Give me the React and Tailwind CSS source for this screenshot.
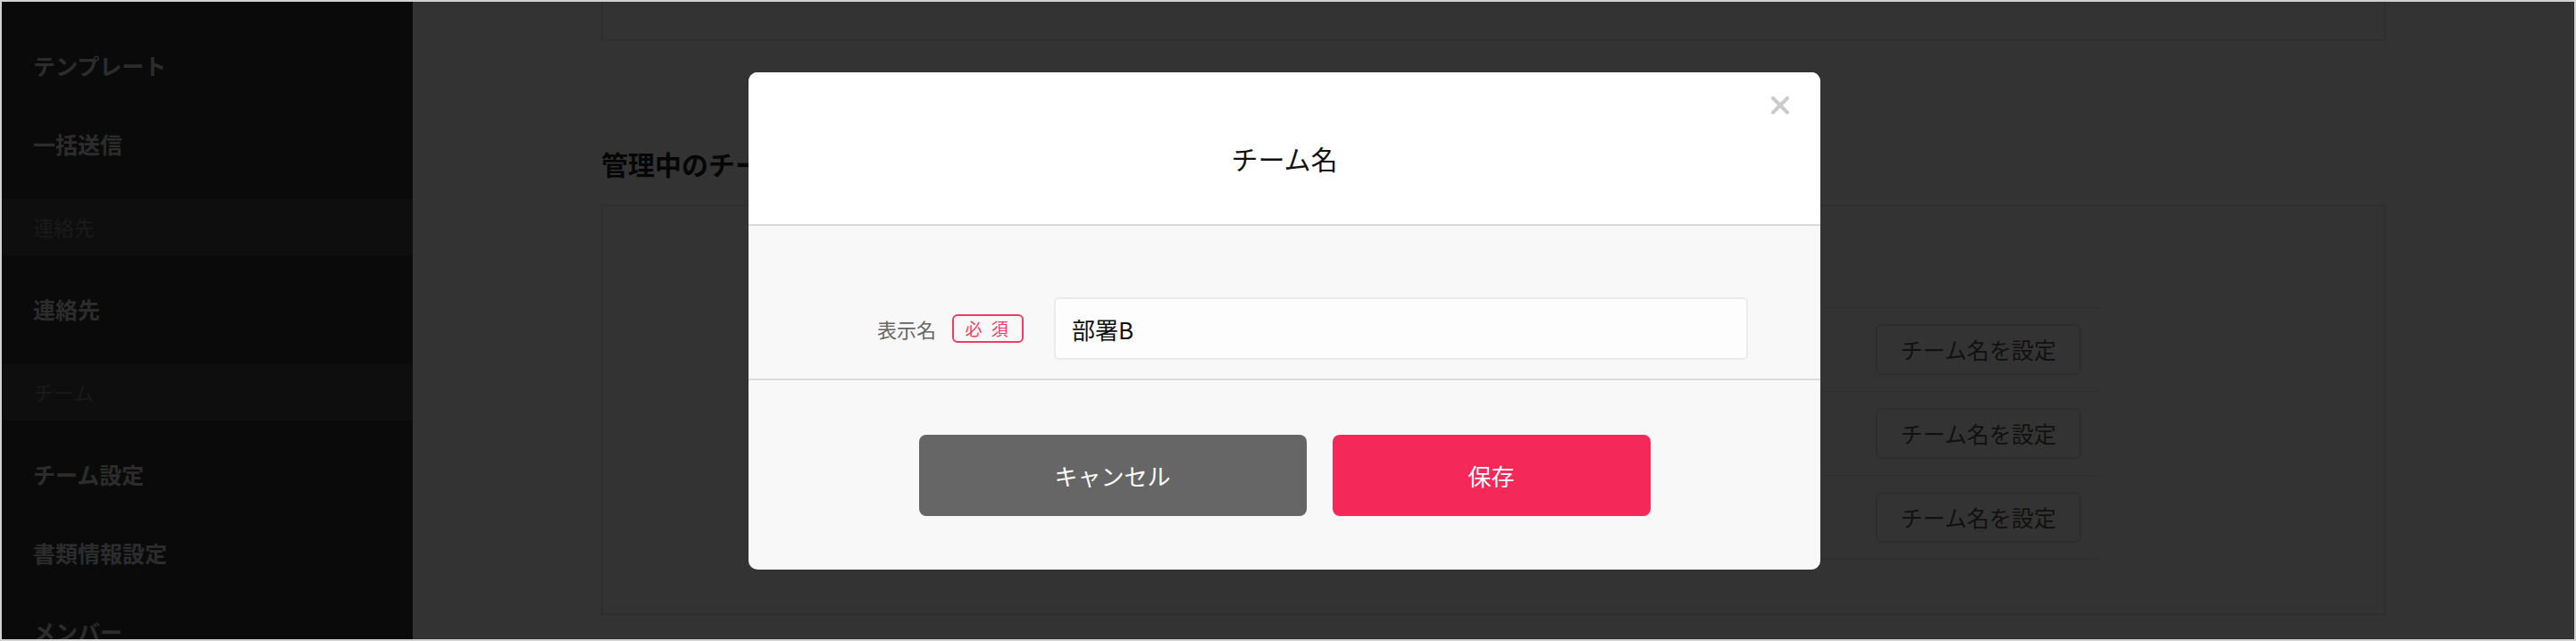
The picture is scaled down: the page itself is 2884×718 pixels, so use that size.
// App.jsx
const menu = [
  { type: 'item', label: 'テンプレート' },
  { type: 'item', label: '一括送信' },
  { type: 'head', label: '連絡先' },
  { type: 'item', label: '連絡先' },
  { type: 'head', label: 'チーム' },
  { type: 'item', label: 'チーム設定' },
  { type: 'item', label: '書類情報設定' },
  { type: 'item', label: 'メンバー' },
]

const teams = ['部署A', '部署B', '部署C']

function Sidebar() {
  return (
    <aside className="w-[460px] shrink-0 bg-[#323232] pt-[28px]">
      {menu.map((m, i) =>
        m.type === 'head' ? (
          <div
            key={i}
            className="h-[63px] my-[17px] bg-[#464646] flex items-center pl-[35px] text-[23px] text-[#808080]"
          >
            {m.label}
          </div>
        ) : (
          <div
            key={i}
            className="h-[88px] flex items-center pl-[35px] text-[25px] font-bold text-[#dcdcdc]"
          >
            {m.label}
          </div>
        )
      )}
    </aside>
  )
}

function TeamList() {
  return (
    <main className="flex-1 bg-white">
      <div className="w-[1998px] mx-auto">
        <div className="h-[44px] border-x-2 border-b-2 border-[#e6e6e6]" />
        <h2 className="mt-[115px] mb-[24px] text-[30px] leading-[44px] font-bold text-[#222]">
          管理中のチーム
        </h2>
        <div className="border-2 border-[#e6e6e6] pt-[113px] pb-[60px] pl-[225px]">
          <div className="w-[1450px] border-t border-[#e6e6e6]">
            {teams.map((t) => (
              <div
                key={t}
                className="h-[94px] border-b border-[#e6e6e6] flex items-center justify-between pl-[40px] pr-[20px]"
              >
                <span className="text-[25px] text-[#333]">{t}</span>
                <button className="w-[230px] h-[57px] border-2 border-[#e2e2e2] rounded-[6px] text-[25px] text-[#555]">
                  チーム名を設定
                </button>
              </div>
            ))}
          </div>
        </div>
      </div>
    </main>
  )
}

function TeamNameModal() {
  return (
    <div className="absolute left-[836px] top-[79px] w-[1200px] rounded-[10px] overflow-hidden bg-[#f8f8f8]">
      <div className="relative h-[172px] bg-white border-b-2 border-[#d9d9d9] pt-[76px] text-center">
        <h3 className="text-[30px] leading-[40px] text-[#111]">チーム名</h3>
        <button className="absolute right-[35px] top-[27px] w-[20px] h-[20px]">
          <svg width="20" height="20" viewBox="0 0 20 20">
            <path d="M2 2 L18 18 M18 2 L2 18" stroke="#cbcbcb" strokeWidth="4" strokeLinecap="round" />
          </svg>
        </button>
      </div>

      <div className="h-[173px] border-b-2 border-[#dcdcdc] pt-[80px] pl-[144px] flex items-start">
        <div className="h-[70px] flex items-center">
          <span className="text-[22px] text-[#666]">表示名</span>
          <span className="ml-[18px] w-[80px] h-[32px] border-2 border-[#f23b63] rounded-[6px] flex items-center justify-center text-[19px] text-[#f23b63] tracking-[3px]">
            必 須
          </span>
        </div>
        <div className="ml-[34px] w-[777px] h-[70px] bg-[#fdfdfd] border-2 border-[#ebebeb] rounded-[6px] flex items-center pl-[18px] text-[26px] text-[#111]">
          部署B
        </div>
      </div>

      <div className="h-[212px] pt-[61px] flex justify-center gap-[29px]">
        <button className="w-[434px] h-[91px] rounded-[8px] bg-[#666] text-white text-[26px]">
          キャンセル
        </button>
        <button className="w-[356px] h-[91px] rounded-[8px] bg-[#f4295a] text-white text-[26px]">
          保存
        </button>
      </div>
    </div>
  )
}

export default function App() {
  return (
    <div className="relative w-[2884px] h-[718px] overflow-hidden border-2 border-[#d2d2d2] flex font-['Noto_Sans_CJK_JP','Noto_Sans',sans-serif]">
      <Sidebar />
      <TeamList />
      <div className="absolute inset-0 bg-black/80">
        <TeamNameModal />
      </div>
    </div>
  )
}
